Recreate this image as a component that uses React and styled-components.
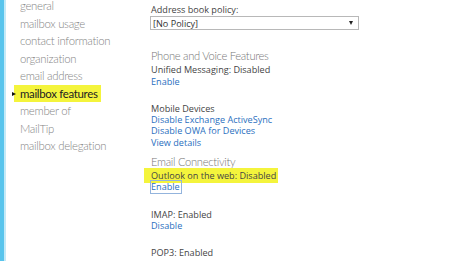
import React from 'react';
import styled, { createGlobalStyle } from 'styled-components';

const GlobalStyle = createGlobalStyle`
  html, body {
    margin: 0;
    padding: 0;
    background: #fff;
    overflow: hidden;
  }
  body {
    font-family: 'Open Sans', 'Noto Sans', sans-serif;
  }
`;

const Page = styled.div`
  display: flex;
  height: 261px;
  overflow: hidden;
`;

const Rail = styled.div`
  width: 4px;
  background: #58c4ec;
  border-right: 2px solid #c4e9f7;
  flex-shrink: 0;
`;

const Sidebar = styled.ul`
  list-style: none;
  margin: -3px 0 0;
  padding: 0 0 0 14px;
  width: 131px;
  flex-shrink: 0;
  font-family: 'Lato', 'Open Sans', sans-serif;
`;

const NavItem = styled.li`
  position: relative;
  font-size: 11.4px;
  font-weight: 300;
  letter-spacing: -0.3px;
  line-height: 17.5px;
  color: ${(p) => (p.$active ? '#222' : '#858585')};
  white-space: nowrap;
`;

const Marker = styled.span`
  background: #f4f43c;
  padding: 2px 3px 2px 6px;
  margin-left: -6px;
  font-weight: 400;
`;

const Arrow = styled.span`
  position: absolute;
  left: -8px;
  top: 7px;
  width: 0;
  height: 0;
  border-top: 2.5px solid transparent;
  border-bottom: 2.5px solid transparent;
  border-left: 4px solid #111;
`;

const Main = styled.div`
  display: flex;
  flex-direction: column;
  padding-top: 4px;
  width: 208px;
`;

const Label = styled.div`
  font-size: 9.1px;
  line-height: 11.3px;
  color: #444;
  white-space: nowrap;
`;

const Select = styled.div`
  display: flex;
  align-items: center;
  justify-content: space-between;
  box-sizing: border-box;
  height: 14px;
  margin-top: 1px;
  margin-left: -1px;
  padding: 0 5px 0 2px;
  border: 1px solid #b8b8b8;
  font-size: 9.1px;
  color: #333;
`;

const Caret = styled.span`
  width: 0;
  height: 0;
  border-left: 2.5px solid transparent;
  border-right: 2.5px solid transparent;
  border-top: 4px solid #222;
`;

const Section = styled.div`
  display: flex;
  flex-direction: column;
  margin-top: ${(p) => p.$top}px;
`;

const Heading = styled.div`
  font-family: 'Lato', 'Open Sans', sans-serif;
  font-size: 11.2px;
  font-weight: 300;
  letter-spacing: -0.3px;
  line-height: 14px;
  color: #777;
  margin-bottom: 1px;
  white-space: nowrap;
`;

const Block = styled.div`
  display: flex;
  flex-direction: column;
  align-items: flex-start;
  & + & {
    margin-top: 16px;
  }
`;

const Status = styled.div`
  font-size: 9.1px;
  line-height: 11.3px;
  color: #444;
  white-space: nowrap;
`;

const Highlight = styled.span`
  background: #f4f43c;
  padding: 1px 2px 1px 7px;
  margin-left: -7px;
`;

const LinkText = styled.a`
  font-size: 9.1px;
  line-height: 11.3px;
  color: #2a6fc0;
  text-decoration: none;
  white-space: nowrap;
  box-sizing: border-box;
  outline: ${(p) => (p.$focused ? '1px solid #93b4dd' : 'none')};
  padding-right: ${(p) => (p.$focused ? '1px' : '0')};
`;

const navItems = [
  'general',
  'mailbox usage',
  'contact information',
  'organization',
  'email address',
  'mailbox features',
  'member of',
  'MailTip',
  'mailbox delegation',
];

export default function App() {
  return (
    <>
      <GlobalStyle />
      <Page>
        <Rail />
        <Sidebar>
          {navItems.map((item) => {
            const active = item === 'mailbox features';
            return (
              <NavItem key={item} $active={active}>
                {active ? (
                  <>
                    <Arrow />
                    <Marker>{item}</Marker>
                  </>
                ) : (
                  item
                )}
              </NavItem>
            );
          })}
        </Sidebar>
        <Main>
          <Label>Address book policy:</Label>
          <Select>
            <span>[No Policy]</span>
            <Caret />
          </Select>

          <Section $top={19}>
            <Heading>Phone and Voice Features</Heading>
            <Block>
              <Status>Unified Messaging: Disabled</Status>
              <LinkText>Enable</LinkText>
            </Block>
            <Block>
              <Status>Mobile Devices</Status>
              <LinkText>Disable Exchange ActiveSync</LinkText>
              <LinkText>Disable OWA for Devices</LinkText>
              <LinkText>View details</LinkText>
            </Block>
          </Section>

          <Section $top={7}>
            <Heading>Email Connectivity</Heading>
            <Block>
              <Status>
                <Highlight>Outlook on the web: Disabled</Highlight>
              </Status>
              <LinkText $focused>Enable</LinkText>
            </Block>
            <Block>
              <Status>IMAP: Enabled</Status>
              <LinkText>Disable</LinkText>
            </Block>
            <Block>
              <Status>POP3: Enabled</Status>
              <LinkText>Disable</LinkText>
            </Block>
          </Section>
        </Main>
      </Page>
    </>
  );
}
